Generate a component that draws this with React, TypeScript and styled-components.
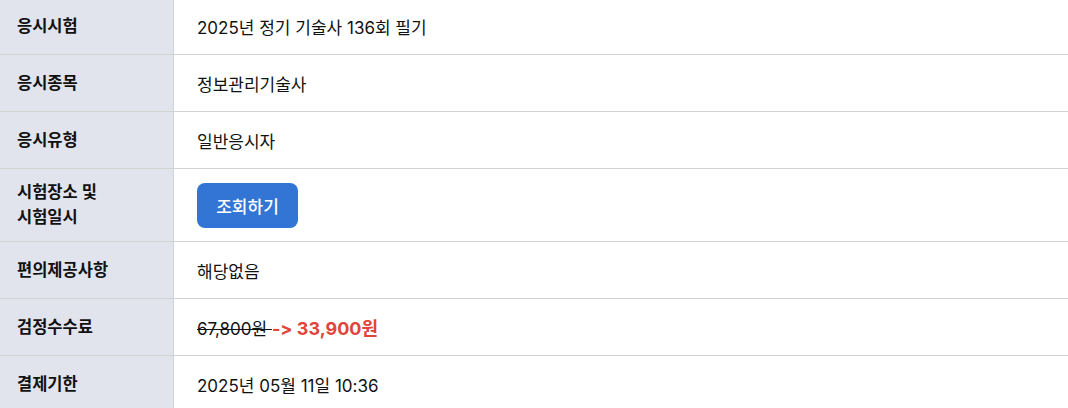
import React from "react";
import styled, { createGlobalStyle } from "styled-components";

const Global = createGlobalStyle`
  html, body { margin: 0; padding: 0; background: #fff; }
  body { font-family: "Inter", "Noto Sans CJK KR", sans-serif; color: #111; overflow: hidden; }
`;

const Table = styled.div`
  display: grid;
  grid-template-columns: 174px 1fr;
  margin-top: -2px;
  width: 1068px;
`;

const Row = styled.div<{ $h: number }>`
  display: contents;
  & > * { min-height: ${(p) => p.$h}px; border-bottom: 1px solid #d3d3d3; }
`;

const Label = styled.div`
  background: #e1e4ed;
  border-right: 1px solid #cfd3da;
  display: flex;
  align-items: center;
  padding-left: 17px;
  font-size: 16.5px;
  font-weight: 700;
  line-height: 25px;
  color: #111;
`;

const Value = styled.div`
  display: flex;
  align-items: center;
  padding-left: 23px;
  font-size: 17px;
  font-weight: 400;
  color: #111;
`;

const Button = styled.button`
  width: 101px;
  height: 45px;
  border: none;
  border-radius: 8px;
  background: #3375d4;
  color: #fff;
  font-family: inherit;
  font-size: 17px;
  font-weight: 500;
  cursor: pointer;
`;

const Old = styled.span`
  text-decoration: line-through;
  white-space: pre;
`;

const New = styled.span`
  color: #e0443a;
  font-weight: 700;
  font-size: 18px;
`;

const rows: { label: React.ReactNode; value: React.ReactNode; h?: number }[] = [
  { label: "응시시험", value: "2025년 정기 기술사 136회 필기" },
  { label: "응시종목", value: "정보관리기술사" },
  { label: "응시유형", value: "일반응시자" },
  {
    label: (
      <span>
        시험장소 및<br />시험일시
      </span>
    ),
    value: <Button>조회하기</Button>,
    h: 72,
  },
  { label: "편의제공사항", value: "해당없음" },
  {
    label: "검정수수료",
    value: (
      <span>
        <Old>67,800원 </Old>
        <New>-&gt; 33,900원</New>
      </span>
    ),
  },
  { label: "결제기한", value: "2025년 05월 11일 10:36" },
];

export default function App() {
  return (
    <>
      <Global />
      <Table>
        {rows.map((r, i) => (
          <Row key={i} $h={r.h ?? 56}>
            <Label>{r.label}</Label>
            <Value>{r.value}</Value>
          </Row>
        ))}
      </Table>
    </>
  );
}
